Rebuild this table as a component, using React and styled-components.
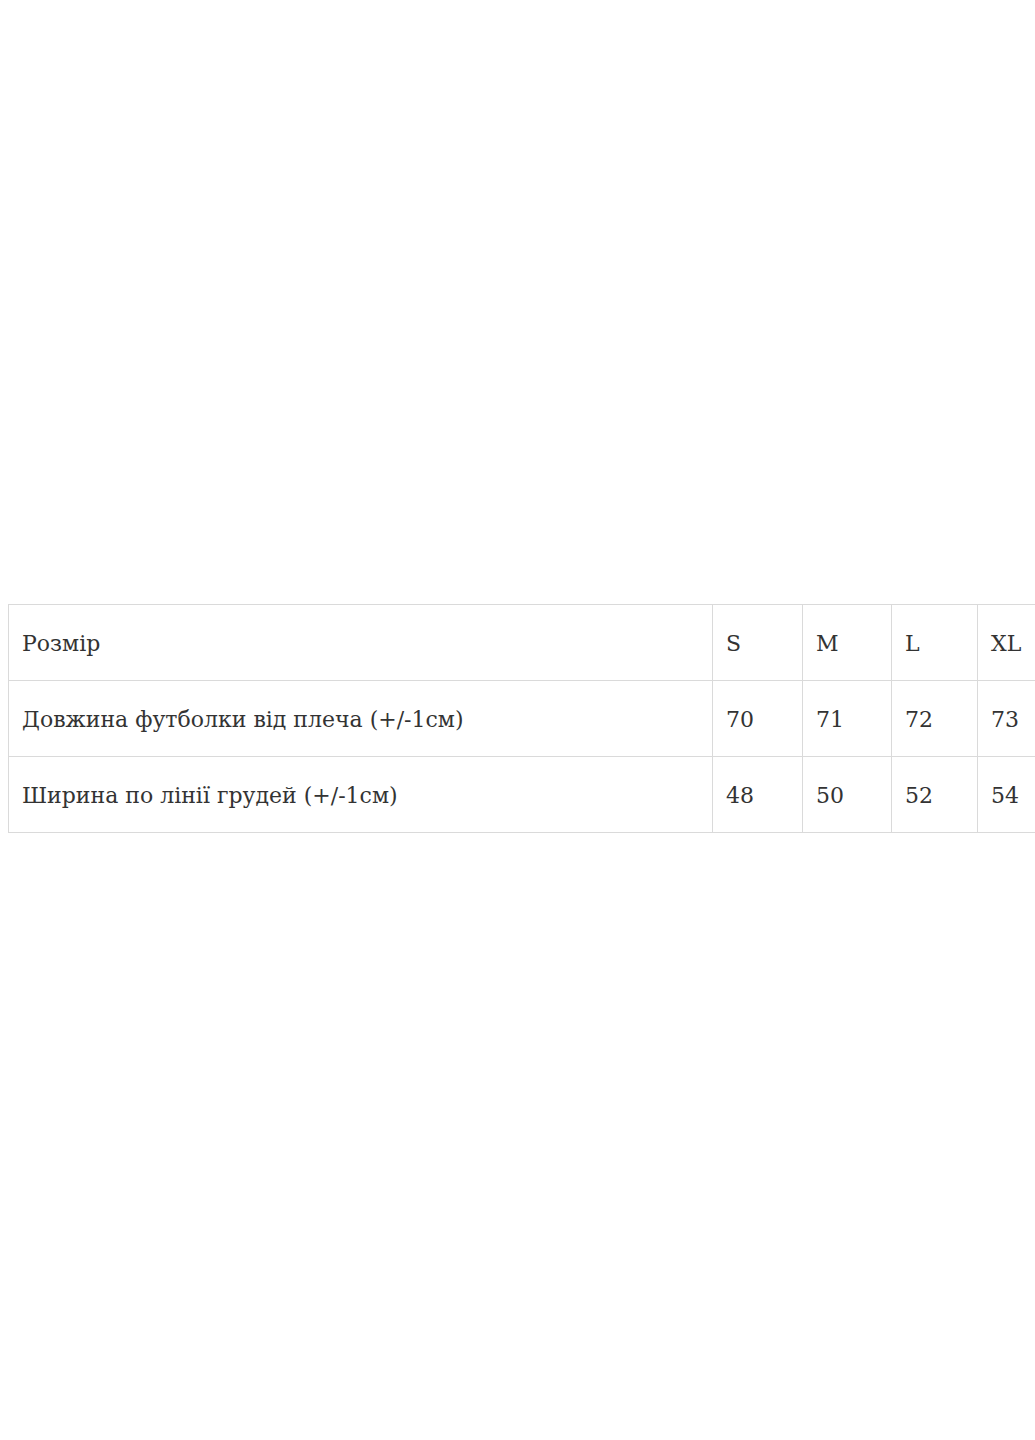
import React from 'react';
import styled, { createGlobalStyle } from 'styled-components';

const GlobalStyle = createGlobalStyle`
  html, body {
    margin: 0;
    padding: 0;
    background: #fff;
    overflow: hidden;
  }
`;

const Page = styled.div`
  width: 1035px;
  height: 1440px;
  overflow: hidden;
  display: flex;
  align-items: center;
  padding-left: 8px;
  padding-bottom: 4px;
  box-sizing: border-box;
`;

const SizeTable = styled.table`
  border-collapse: collapse;
  table-layout: fixed;
  width: 1150px;
  flex-shrink: 0;
  font-family: "DejaVu Serif", "Liberation Serif", serif;
  font-size: 22px;
  color: #333;
`;

const Cell = styled.td`
  border: 1px solid #dadada;
  height: 73px;
  padding: 2px 13px 0;
  vertical-align: middle;
  white-space: nowrap;
`;

const columns = [704, 90, 89, 86, 181];

const rows = [
  ['Розмір', 'S', 'M', 'L', 'XL'],
  ['Довжина футболки від плеча (+/-1см)', '70', '71', '72', '73'],
  ['Ширина по лінії грудей (+/-1см)', '48', '50', '52', '54'],
];

const App = () => (
  <>
    <GlobalStyle />
    <Page>
      <SizeTable>
        <colgroup>
          {columns.map((w, i) => (
            <col key={i} style={{ width: w }} />
          ))}
        </colgroup>
        <tbody>
          {rows.map((row, r) => (
            <tr key={r}>
              {row.map((cell, c) => (
                <Cell key={c}>{cell}</Cell>
              ))}
            </tr>
          ))}
        </tbody>
      </SizeTable>
    </Page>
  </>
);

export default App;
